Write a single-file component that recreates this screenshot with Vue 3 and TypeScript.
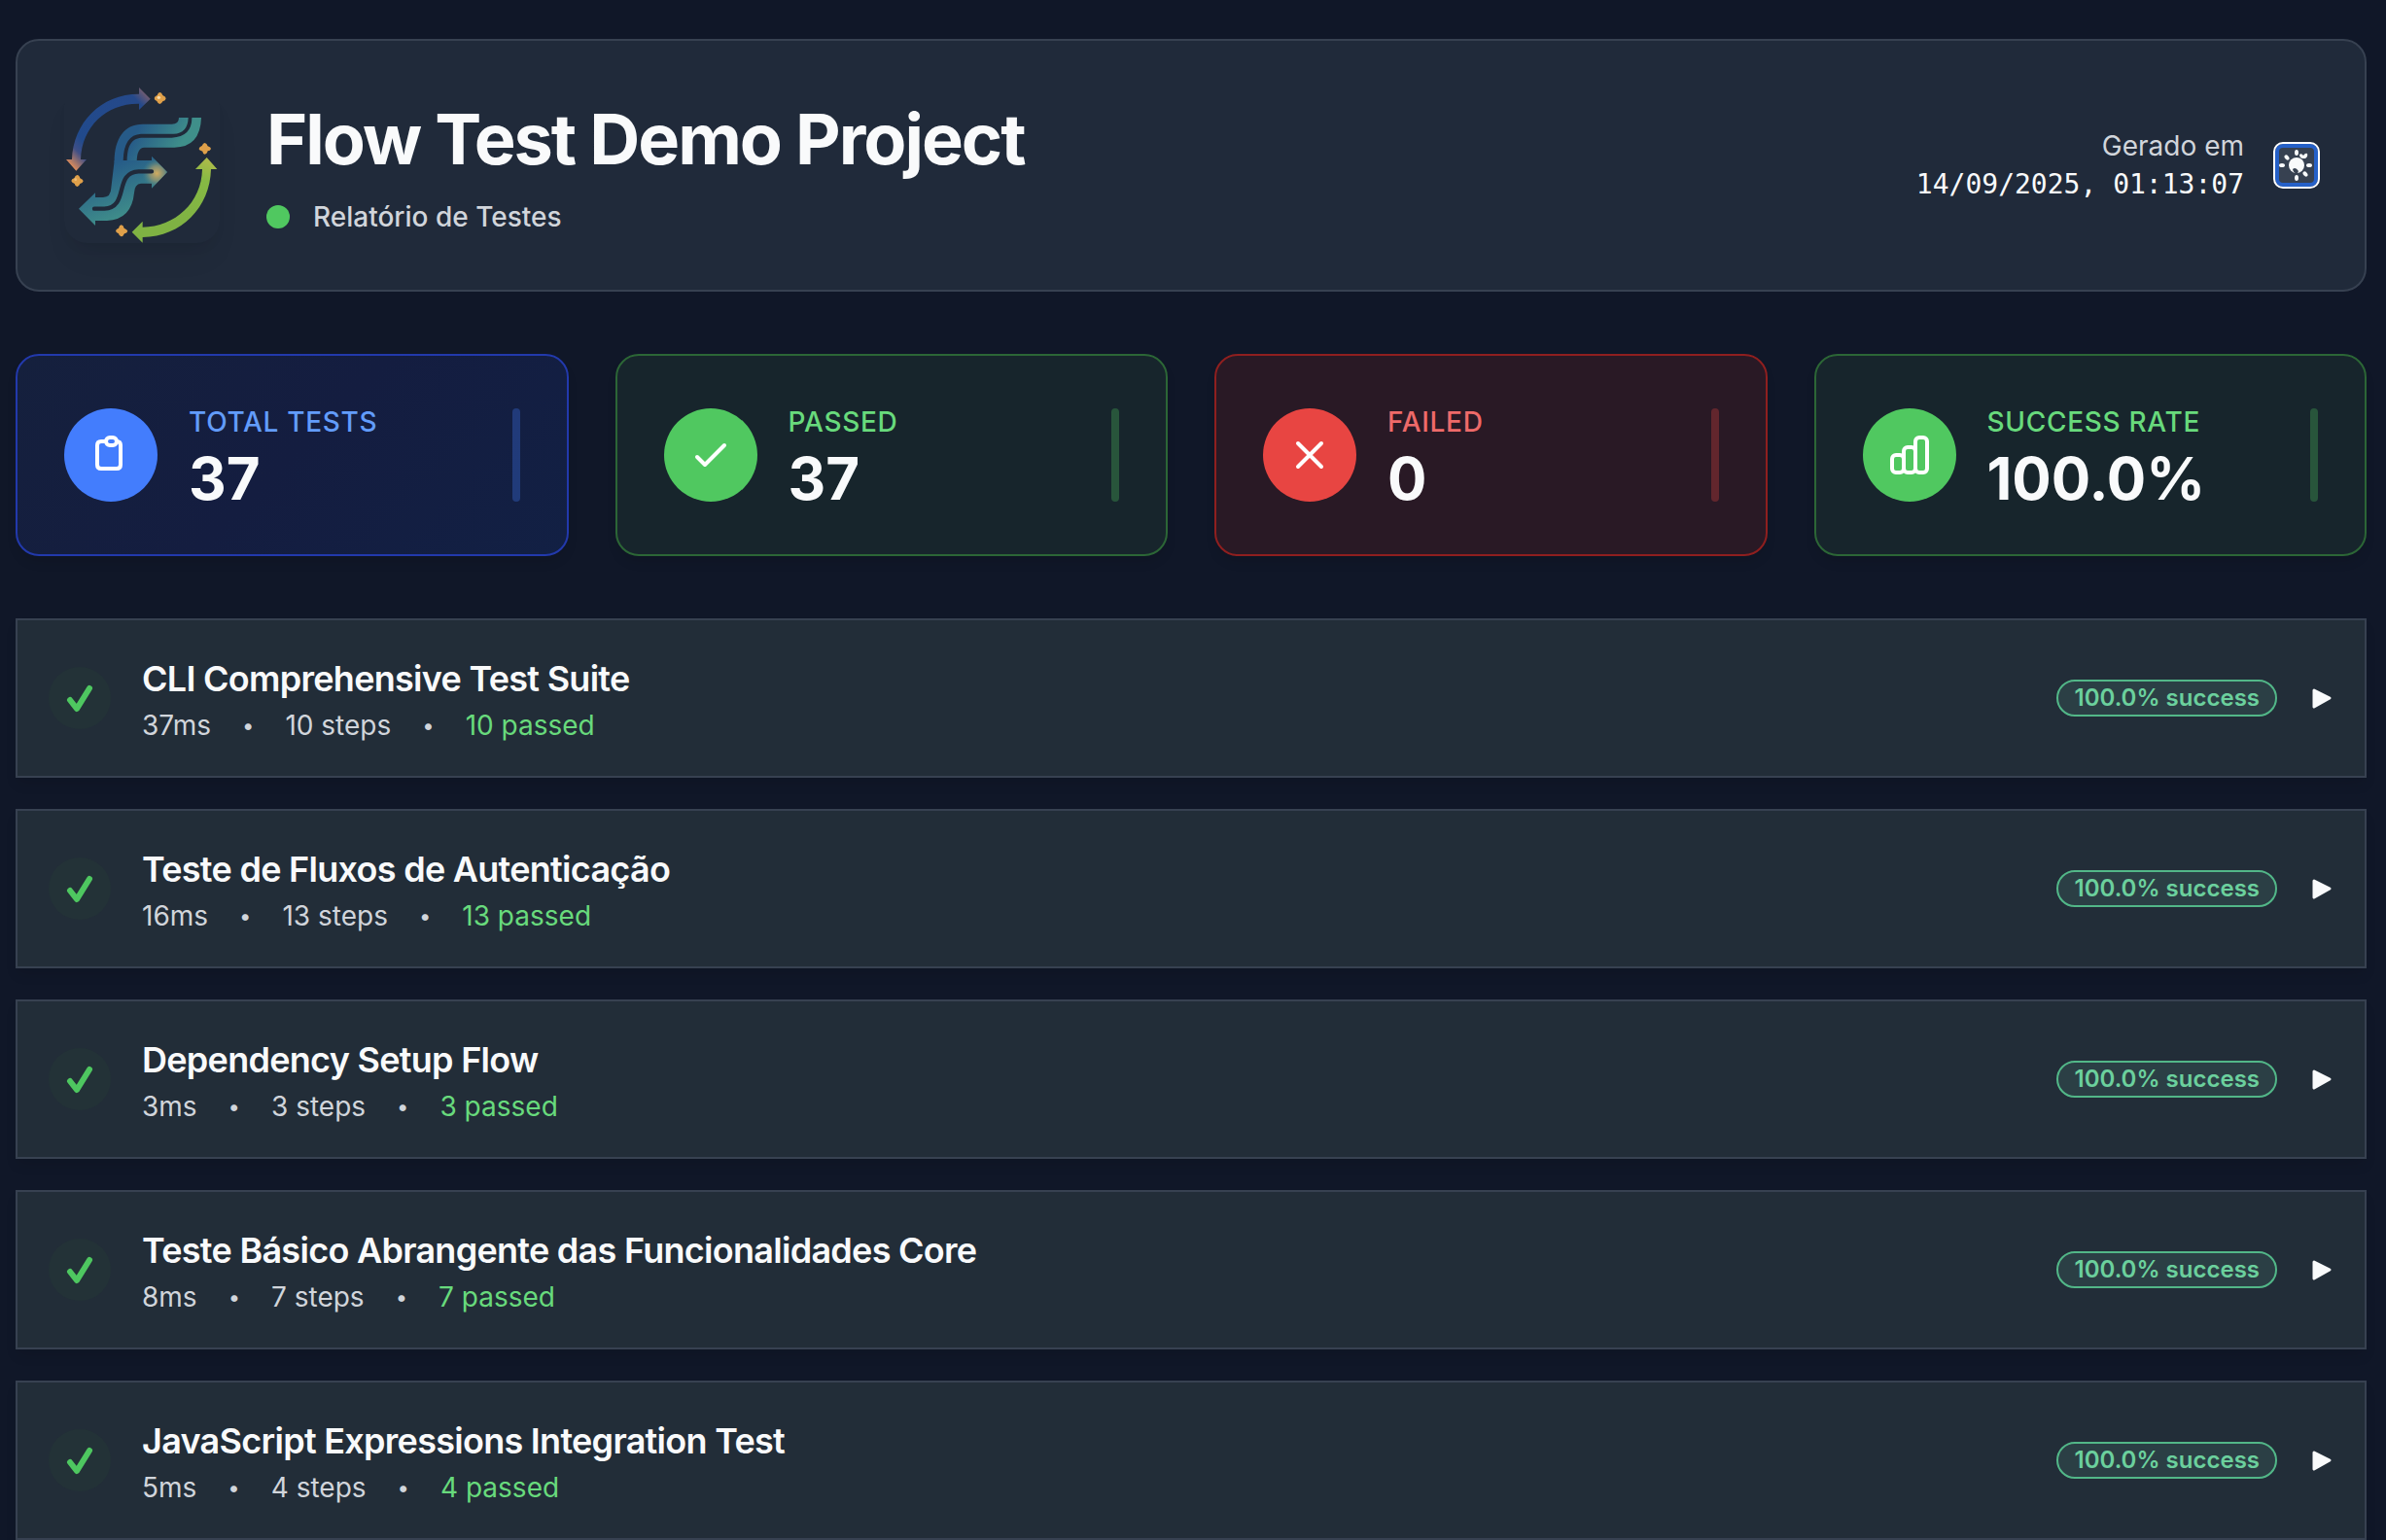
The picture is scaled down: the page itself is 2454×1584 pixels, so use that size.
<script setup lang="ts">
import { ref } from 'vue'

type Tone = 'blue' | 'green' | 'red'
type IconName = 'clipboard' | 'check' | 'cross' | 'bars'

interface Stat {
  label: string
  value: string
  tone: Tone
  icon: IconName
}

interface Suite {
  name: string
  duration: string
  steps: number
  passed: number
  rate: string
}

const stats: Stat[] = [
  { label: 'TOTAL TESTS', value: '37', tone: 'blue', icon: 'clipboard' },
  { label: 'PASSED', value: '37', tone: 'green', icon: 'check' },
  { label: 'FAILED', value: '0', tone: 'red', icon: 'cross' },
  { label: 'SUCCESS RATE', value: '100.0%', tone: 'green', icon: 'bars' },
]

const suites: Suite[] = [
  { name: 'CLI Comprehensive Test Suite', duration: '37ms', steps: 10, passed: 10, rate: '100.0%' },
  { name: 'Teste de Fluxos de Autenticação', duration: '16ms', steps: 13, passed: 13, rate: '100.0%' },
  { name: 'Dependency Setup Flow', duration: '3ms', steps: 3, passed: 3, rate: '100.0%' },
  { name: 'Teste Básico Abrangente das Funcionalidades Core', duration: '8ms', steps: 7, passed: 7, rate: '100.0%' },
  { name: 'JavaScript Expressions Integration Test', duration: '5ms', steps: 4, passed: 4, rate: '100.0%' },
]

const openSuite = ref<string | null>(null)

function toggle(name: string): void {
  openSuite.value = openSuite.value === name ? null : name
}
</script>

<template>
  <main class="page">
    <header class="header">
      <div class="brand">
        <svg class="logo" viewBox="48 60 480 480" aria-hidden="true">
          <defs>
            <linearGradient id="arcBlue" gradientUnits="userSpaceOnUse" x1="85" y1="316" x2="312" y2="95">
              <stop offset="0" stop-color="#d98a5c" />
              <stop offset="0.14" stop-color="#3f4f86" />
              <stop offset="0.25" stop-color="#214a8c" />
              <stop offset="0.9" stop-color="#25498a" />
              <stop offset="1" stop-color="#6a5a72" />
            </linearGradient>
            <linearGradient id="arcGreen" gradientUnits="userSpaceOnUse" x1="488" y1="276" x2="400" y2="480">
              <stop offset="0" stop-color="#b0bb4a" />
              <stop offset="0.3" stop-color="#86b944" />
              <stop offset="1" stop-color="#7fb243" />
            </linearGradient>
            <linearGradient id="ribbonTop" gradientUnits="userSpaceOnUse" x1="280" y1="180" x2="400" y2="250">
              <stop offset="0" stop-color="#265a88" />
              <stop offset="1" stop-color="#3f8f8a" />
            </linearGradient>
            <linearGradient id="ribbonStem" gradientUnits="userSpaceOnUse" x1="190" y1="300" x2="250" y2="450">
              <stop offset="0" stop-color="#265c88" />
              <stop offset="1" stop-color="#3f8d8a" />
            </linearGradient>
            <radialGradient id="tip" gradientUnits="userSpaceOnUse" cx="334" cy="325" r="46">
              <stop offset="0" stop-color="#d3ac60" />
              <stop offset="0.5" stop-color="#8a9273" stop-opacity="0.85" />
              <stop offset="1" stop-color="#3f7f88" stop-opacity="0" />
            </radialGradient>
          </defs>
          <path d="M54 282H72C76 170 160 80 279 80V60L314 95L279 129V110C180 108 102 180 99 282H117L85 317Z" fill="url(#arcBlue)" />
          <path d="M488 276L520 312H501C498 430 410 520 290 522V539L257 506L290 473V491C390 490 472 415 474 312H453Z" fill="url(#arcGreen)" />
          <path d="M203 290C203 215 235 173 290 173H380Q402 173 402 153H431Q429 203 385 203H285Q232 206 230 285Z" fill="url(#ribbonTop)" />
          <path d="M242 290C242 235 258 215 292 215H380Q442 212 442 153H471Q468 244 388 245H295Q272 246 272 290Z" fill="url(#ribbonTop)" />
          <path d="M203 285H318V272L366 321L318 371V356H285Q265 358 264 385Q256 468 180 471H144V486L93 434L144 385V399H168Q192 399 193 370Z" fill="url(#ribbonStem)" />
          <path d="M203 285H318V272L366 321L318 371V356H260V285Z" fill="url(#tip)" />
          <path d="M141 434H172C250 430 200 322 278 319H318" fill="none" stroke="#202a3a" stroke-width="13" stroke-linecap="round" />
          <g fill="#dfa04a">
            <path d="M343 75Q349 75 352 84Q362 88 362 94Q361 101 352 103Q348 111 343 111Q337 110 334 102Q326 99 326 93Q327 87 335 84Q338 75 343 75Z" />
            <path d="M482 231Q488 232 491 241Q501 244 501 249Q499 256 491 256Q488 266 482 266Q476 265 475 257Q464 254 464 249Q465 243 473 240Q477 231 482 231Z" />
            <path d="M88 330Q94 330 97 340Q107 344 107 349Q105 355 97 357Q93 366 88 366Q82 365 80 357Q70 353 70 348Q71 342 79 340Q82 331 88 330Z" />
            <path d="M224 484Q231 485 233 494Q243 498 244 503Q242 509 234 511Q230 520 224 520Q217 519 216 511Q207 508 207 502Q209 496 216 494Q218 485 224 484Z" />
          </g>
          <circle cx="340" cy="91" r="5" fill="#f6dcae" />
          <circle cx="83" cy="344" r="4" fill="#eebd77" />
        </svg>
        <div class="titles">
          <h1 class="title">Flow Test Demo Project</h1>
          <p class="subtitle"><span class="status-dot"></span>Relatório de Testes</p>
        </div>
      </div>
      <div class="meta">
        <div class="generated">
          <span class="generated-label">Gerado em</span>
          <time class="generated-time" datetime="2025-09-14T01:13:07">14/09/2025, 01:13:07</time>
        </div>
        <button class="theme-toggle" type="button" aria-label="Alternar tema">
          <svg viewBox="0 0 36 36" aria-hidden="true">
            <g fill="#f9fafb">
              <circle cx="18" cy="18" r="8" />
              <ellipse cx="18" cy="5" rx="2" ry="3" />
              <ellipse cx="18" cy="31" rx="2" ry="3" />
              <ellipse cx="3" cy="18" rx="3" ry="2" />
              <ellipse cx="33" cy="18" rx="3" ry="2" transform="translate(-2 0)" />
              <ellipse cx="8" cy="10" rx="2" ry="3" transform="rotate(-40 8 10)" />
              <ellipse cx="27" cy="27" rx="2" ry="3" transform="rotate(-40 27 27)" />
              <path d="M21 7Q23 5 25 8Q27 5 29 6Q30 9 27 11H24Q21 10 21 7Z" />
            </g>
            <path d="M14 22Q17 19 20 24L19 26Q15 27 14 22Z" fill="#374151" />
          </svg>
        </button>
      </div>
    </header>

    <section class="stats" aria-label="Resumo">
      <article v-for="stat in stats" :key="stat.label" class="card" :class="stat.tone">
        <span class="badge-icon">
          <svg viewBox="0 0 48 48" fill="none" stroke="#fff" stroke-width="4" stroke-linecap="round" stroke-linejoin="round" aria-hidden="true">
            <template v-if="stat.icon === 'clipboard'">
              <path d="M18 10H14Q10 10 10 14V34Q10 38 14 38H30Q34 38 34 34V14Q34 10 30 10" />
              <rect x="19" y="6" width="11" height="8" rx="4" />
            </template>
            <path v-else-if="stat.icon === 'check'" d="M10 26L18 34L38 14" />
            <path v-else-if="stat.icon === 'cross'" d="M12 12L36 36M36 12L12 36" />
            <template v-else>
              <rect x="6" y="24" width="12" height="18" rx="4" />
              <rect x="18" y="16" width="12" height="26" rx="4" />
              <rect x="30" y="6" width="12" height="36" rx="4" />
            </template>
          </svg>
        </span>
        <div class="card-text">
          <h2 class="card-label">{{ stat.label }}</h2>
          <p class="card-value">{{ stat.value }}</p>
        </div>
        <span class="accent"></span>
      </article>
    </section>

    <section class="suites" aria-label="Suites">
      <button
        v-for="suite in suites"
        :key="suite.name"
        class="suite"
        type="button"
        :aria-expanded="openSuite === suite.name"
        @click="toggle(suite.name)"
      >
        <span class="suite-icon">
          <svg viewBox="0 0 32 32" fill="none" stroke="#4ec760" stroke-width="6" stroke-linecap="round" stroke-linejoin="round" aria-hidden="true">
            <path d="M6 18L13 27L26 6" />
          </svg>
        </span>
        <span class="suite-text">
          <span class="suite-name">{{ suite.name }}</span>
          <span class="suite-meta">
            <span>{{ suite.duration }}</span>
            <span class="separator">•</span>
            <span>{{ suite.steps }} steps</span>
            <span class="separator">•</span>
            <span class="passed">{{ suite.passed }} passed</span>
          </span>
        </span>
        <span class="rate">{{ suite.rate }} success</span>
        <svg class="arrow" :class="{ open: openSuite === suite.name }" viewBox="0 0 26 26" aria-hidden="true">
          <path d="M6 5L22 13L6 22Z" fill="#f9fafb" stroke="#f9fafb" stroke-width="3" stroke-linejoin="round" />
        </svg>
      </button>
    </section>
  </main>
</template>

<style>
body {
  margin: 0;
  background: #101728;
}
</style>

<style scoped>
.page {
  box-sizing: border-box;
  padding: 40px 20px 0 16px;
  display: flex;
  flex-direction: column;
  gap: 64px;
  font-family: Inter, "Liberation Sans", sans-serif;
  font-size: 28px;
  line-height: 40px;
  color: #f9fafb;
}

h1,
h2,
p {
  margin: 0;
}

.header {
  display: flex;
  align-items: center;
  justify-content: space-between;
  padding: 48px;
  border: 2px solid #374151;
  border-radius: 24px;
  background: #202a3a;
}

.brand {
  display: flex;
  align-items: center;
  gap: 48px;
}

.logo {
  width: 160px;
  height: 160px;
  border-radius: 24px;
  box-shadow: 0 20px 30px -6px rgba(0, 0, 0, 0.06), 0 8px 12px -4px rgba(0, 0, 0, 0.06);
}

.titles {
  display: flex;
  flex-direction: column;
  gap: 14px;
}

.title {
  font-size: 72px;
  line-height: 92px;
  font-weight: 700;
  letter-spacing: -2px;
}

.subtitle {
  display: flex;
  align-items: center;
  gap: 24px;
  font-weight: 500;
  color: #d1d5db;
}

.status-dot {
  width: 24px;
  height: 24px;
  border-radius: 50%;
  background: #50c860;
}

.meta {
  display: flex;
  align-items: center;
  gap: 32px;
}

.generated {
  display: flex;
  flex-direction: column;
  text-align: right;
}

.generated-label {
  color: #d1d5db;
}

.generated-time {
  font-family: "DejaVu Sans Mono", monospace;
}

.theme-toggle {
  width: 44px;
  height: 44px;
  padding: 0;
  border: 4px solid #2560c8;
  border-radius: 8px;
  background: #374151;
  outline: 2px solid #fff;
}

.theme-toggle svg {
  display: block;
  width: 36px;
  height: 36px;
}

.stats {
  display: grid;
  grid-template-columns: repeat(4, 1fr);
  gap: 48px;
}

.card {
  display: flex;
  align-items: center;
  gap: 32px;
  padding: 48px;
  border: 2px solid;
  border-radius: 24px;
  box-shadow: 0 8px 12px -2px rgba(0, 0, 0, 0.1);
}

.card.blue {
  border-color: #2239ac;
  background: linear-gradient(135deg, #15203d, #141d40 50%, #122044);
}

.card.green {
  border-color: #2c6636;
  background: #17252c;
}

.card.red {
  border-color: #8f1f1f;
  background: #291925;
}

.badge-icon {
  display: grid;
  place-items: center;
  width: 96px;
  height: 96px;
  border-radius: 50%;
}

.badge-icon svg {
  width: 48px;
  height: 48px;
}

.blue .badge-icon,
.blue .accent {
  background: #437dfd;
}

.green .badge-icon,
.green .accent {
  background: #50c860;
}

.red .badge-icon,
.red .accent {
  background: #e84542;
}

.card-text {
  flex: 1;
  display: flex;
  flex-direction: column;
  gap: 8px;
}

.card-label {
  font-size: 28px;
  font-weight: 500;
  letter-spacing: 0.025em;
}

.blue .card-label {
  color: #629cfb;
}

.green .card-label {
  color: #68da7c;
}

.red .card-label {
  color: #ee6a69;
}

.card-value {
  font-size: 60px;
  line-height: 60px;
  font-weight: 700;
}

.accent {
  width: 8px;
  height: 96px;
  border-radius: 4px;
  opacity: 0.3;
}

.suites {
  display: flex;
  flex-direction: column;
  gap: 32px;
}

.suite {
  display: flex;
  align-items: center;
  gap: 32px;
  padding: 32px;
  border: 2px solid #374151;
  background: #222d38;
  box-shadow: 0 8px 12px -2px rgba(0, 0, 0, 0.1);
  font: inherit;
  color: inherit;
  text-align: left;
}

.suite-icon {
  display: grid;
  place-items: center;
  width: 64px;
  height: 64px;
  border-radius: 50%;
  background: #233237;
}

.suite-icon svg {
  width: 32px;
  height: 32px;
}

.suite-text {
  flex: 1;
  display: flex;
  flex-direction: column;
}

.suite-name {
  font-size: 36px;
  line-height: 56px;
  font-weight: 600;
  letter-spacing: -0.02em;
}

.suite-meta {
  display: flex;
  gap: 32px;
  color: #d1d5db;
}

.separator {
  font-size: 22px;
}

.passed {
  color: #68da7c;
}

.rate {
  padding: 0 16px;
  border: 2px solid #52b788;
  border-radius: 20px;
  background: #2b3f45;
  font-size: 24px;
  line-height: 34px;
  font-weight: 600;
  color: #6bd09d;
}

.arrow {
  width: 26px;
  height: 26px;
}

.arrow.open {
  transform: rotate(90deg);
}
</style>
